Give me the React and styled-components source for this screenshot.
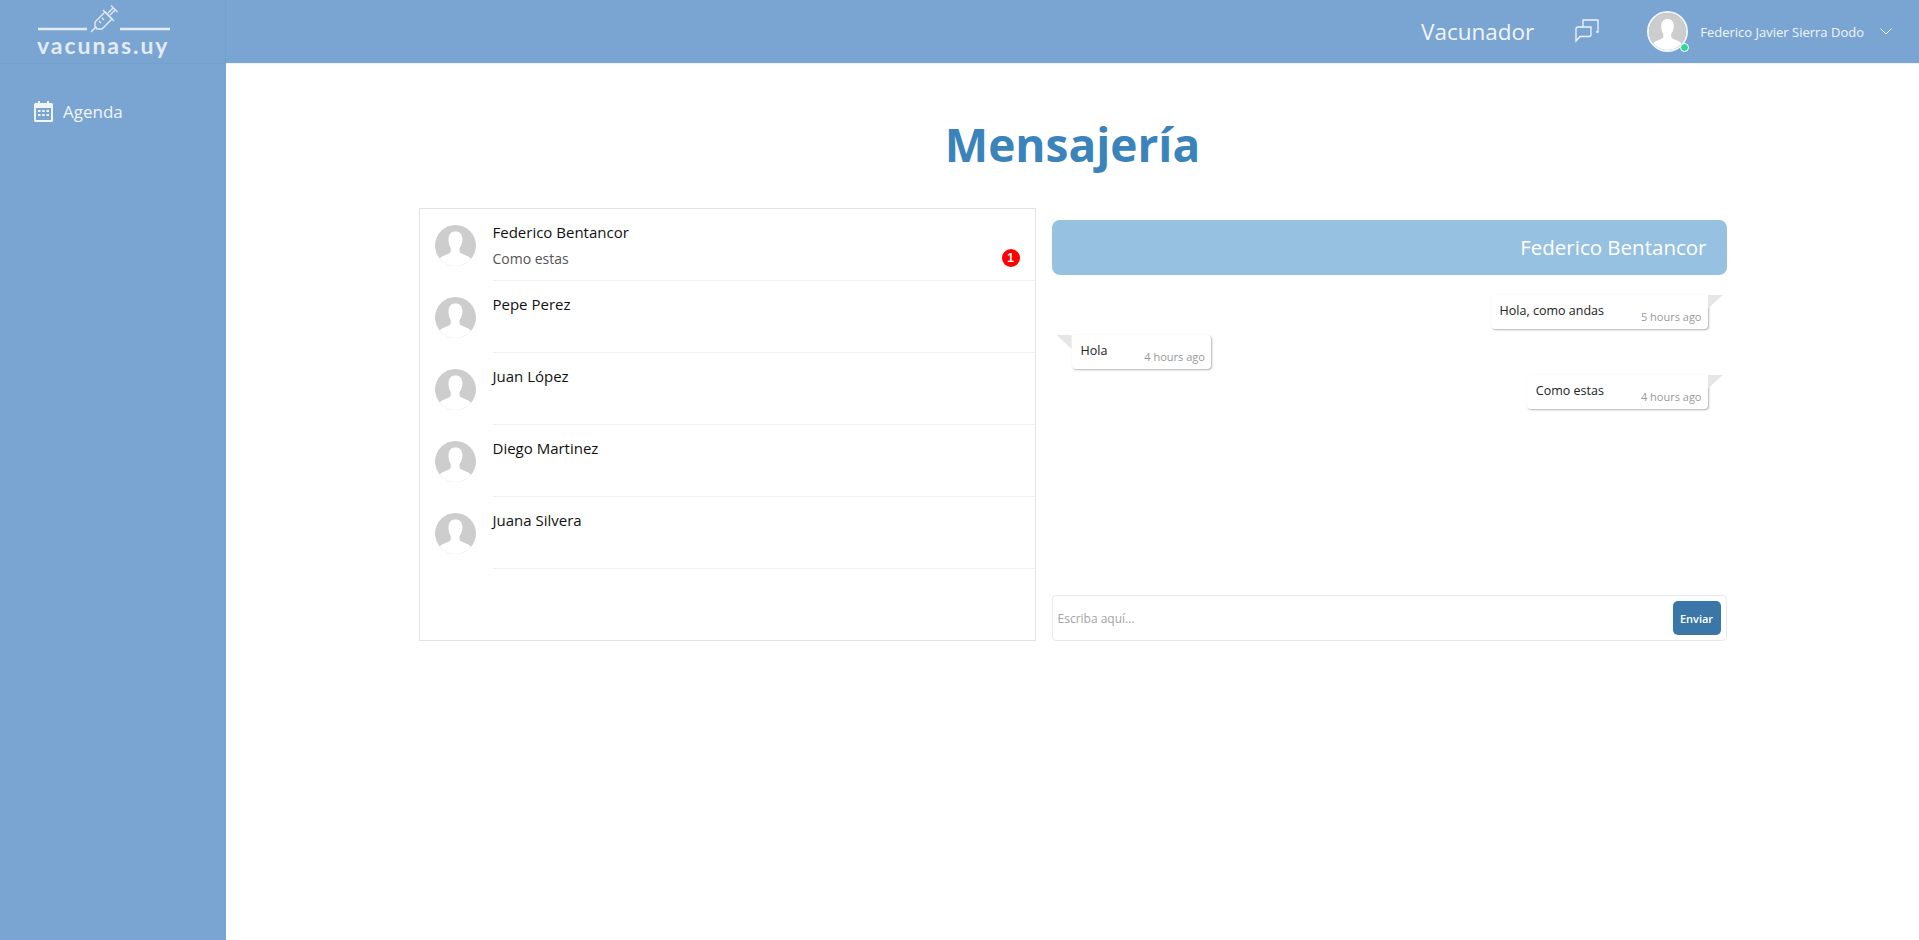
import React from 'react'
import styled, { createGlobalStyle } from 'styled-components'

const GlobalStyle = createGlobalStyle`
  html, body {
    margin: 0;
    padding: 0;
    height: 100%;
    background: #fff;
    font-family: "Open Sans", "Noto Sans", sans-serif;
  }
  * { box-sizing: border-box; }
`

const contacts = [
  { name: 'Federico Bentancor', last: 'Como estas', unread: 1 },
  { name: 'Pepe Perez' },
  { name: 'Juan López' },
  { name: 'Diego Martinez' },
  { name: 'Juana Silvera' },
]

const messages = [
  { text: 'Hola, como andas', time: '5 hours ago', mine: true },
  { text: 'Hola', time: '4 hours ago', mine: false },
  { text: 'Como estas', time: '4 hours ago', mine: true },
]

const Avatar = ({ className }) => (
  <svg className={className} viewBox="0 0 40 40">
    <defs>
      <clipPath id="av"><circle cx="20" cy="20" r="20" /></clipPath>
    </defs>
    <g clipPath="url(#av)">
      <rect width="40" height="40" fill="#cdcdcd" />
      <path d="M13.2 14c0-5 2.8-7.6 6.8-7.6s6.8 2.6 6.8 7.6c0 3.4-1.2 6.6-2.8 8.4v3.2c0 1.2 1 1.9 2.4 2.5l5.6 2.4c2 .9 3 2.2 3.4 4.5V41H4v-6c.4-2.300 1.400-3.600 3.400-4.500l5.600-2.400c1.400-.6 2.400-1.300 2.400-2.500v-3.200c-1.600-1.800-2.200-5-2.200-8.400z" fill="#fff" />
    </g>
  </svg>
)

const Page = styled.div`
  display: flex;
  min-height: 940px;
`

const Sidebar = styled.aside`
  width: 226px;
  flex-shrink: 0;
  background: #7aa5d2;
`

const LogoBox = styled.div`
  height: 64px;
  padding: 4px 0 0 37px;
  border-right: 1px solid #74a0cd;
  border-bottom: 1px solid #74a0cd;
`

const LogoArt = styled.svg`
  display: block;
  width: 134px;
  height: 31px;
`

const LogoText = styled.div`
  margin-top: -1px;
  font-family: "Lato", sans-serif;
  font-size: 23px;
  line-height: 23px;
  font-weight: 700;
  letter-spacing: 1.95px;
  color: #e3ebf4;
`

const Nav = styled.nav`
  padding: 32px 0 0 34px;
`

const NavItem = styled.a`
  display: flex;
  align-items: center;
  gap: 10px;
  height: 30px;
  color: #f0f5fa;
  font-size: 17px;
`

const Main = styled.div`
  flex: 1;
  min-width: 0;
`

const Topbar = styled.header`
  height: 64px;
  background: #7aa5d2;
  border-bottom: 1px solid #f2f2f2;
  display: flex;
  align-items: center;
  justify-content: flex-end;
  padding-right: 27px;
  color: #f1f5f9;
`

const Role = styled.span`
  font-size: 22.500px;
  margin-right: 41px;
`

const ChatIcon = styled.svg`
  width: 25px;
  height: 25px;
  margin-right: 47px;
`

const UserAvatar = styled.div`
  position: relative;
  width: 41px;
  height: 41px;
  margin-right: 12px;
  border: 2px solid #f1f5f9;
  border-radius: 50%;

  svg { display: block; width: 100%; height: 100%; }
`

const Online = styled.span`
  position: absolute;
  right: -3px;
  bottom: -2px;
  width: 9px;
  height: 9px;
  border-radius: 50%;
  background: #33d49b;
  border: 1px solid #fff;
`

const UserName = styled.span`
  font-size: 13px;
  margin-right: 16px;
`

const Content = styled.main`
  width: 1308px;
  margin: 0 auto;
`

const Title = styled.h1`
  margin: 0;
  padding-top: 46px;
  height: 144px;
  text-align: center;
  color: #3a84bb;
  font-size: 46px;
  line-height: 68px;
  font-weight: 700;
`

const Panels = styled.div`
  display: grid;
  grid-template-columns: 617px 675px;
  column-gap: 16px;
  height: 433px;
`

const ContactList = styled.section`
  border: 1px solid #e3e3e3;
`

const ContactRow = styled.div`
  display: flex;
  height: 72px;
  padding-left: 15px;
`

const ContactAvatar = styled(Avatar)`
  width: 41px;
  height: 41px;
  margin: 16px 17px 0 0;
  flex-shrink: 0;
`

const ContactBody = styled.div`
  position: relative;
  flex: 1;
  padding-top: 13px;
  border-bottom: 1px solid #efefef;
`

const ContactName = styled.div`
  font-size: 15px;
  line-height: 20px;
  color: #111;
`

const ContactLast = styled.div`
  margin-top: 7px;
  font-size: 14px;
  line-height: 20px;
  color: #555;
`

const Badge = styled.span`
  position: absolute;
  right: 15px;
  bottom: 13px;
  width: 18px;
  height: 18px;
  border-radius: 50%;
  background: #f00;
  color: #fff;
  font-family: "Liberation Sans", sans-serif;
  font-size: 12px;
  font-weight: 700;
  line-height: 18px;
  text-align: center;
`

const Chat = styled.section`
  display: flex;
  flex-direction: column;
  padding-top: 12px;
`

const ChatHeader = styled.div`
  height: 55px;
  flex-shrink: 0;
  border-radius: 8px;
  background: #97c1e0;
  color: #fff;
  font-size: 20.500px;
  line-height: 55px;
  text-align: right;
  padding-right: 20px;
`

const MessageList = styled.div`
  flex: 1;
  display: flex;
  flex-direction: column;
  gap: 6px;
  padding: 20px 19px 0 20px;
`

const Bubble = styled.div`
  position: relative;
  align-self: ${p => (p.$mine ? 'flex-end' : 'flex-start')};
  display: flex;
  height: 34px;
  padding: 0 6px 0 ${p => (p.$mine ? '9px' : '9px')};
  background: #fff;
  border-radius: ${p => (p.$mine ? '4px 0 4px 4px' : '0 4px 4px 4px')};
  box-shadow: 1px 1px 2px rgba(0, 0, 0, 0.3);

  &::before {
    content: '';
    position: absolute;
    top: 0;
    ${p => (p.$mine ? 'right: -15px' : 'left: -15px')};
    width: 15px;
    height: 14px;
    background: #e6e6e6;
    clip-path: ${p => (p.$mine
      ? 'polygon(0 0, 100% 0, 0 100%)'
      : 'polygon(0 0, 100% 0, 100% 100%)')};
  }
`

const BubbleText = styled.span`
  font-size: 12.500px;
  line-height: 32px;
  color: #222;
`

const BubbleTime = styled.span`
  margin-left: ${p => (p.$mine ? '37px' : '37px')};
  font-size: 11px;
  line-height: 44px;
  color: #999;
`

const Composer = styled.form`
  height: 46px;
  display: flex;
  align-items: center;
  justify-content: space-between;
  padding: 0 5px;
  border: 1px solid #e8e8ee;
  border-radius: 4px;
`

const ComposerInput = styled.input`
  flex: 1;
  border: 0;
  outline: 0;
  padding: 0;
  font-family: inherit;
  font-size: 12px;

  &::placeholder { color: #a5a5a5; opacity: 1; }
`

const SendButton = styled.button`
  width: 48px;
  height: 34px;
  border: 0;
  border-radius: 5px;
  padding: 0;
  background: #3a77a8;
  color: #fff;
  font-family: inherit;
  font-size: 11px;
  font-weight: 600;
`

export default function App() {
  return (
    <>
      <GlobalStyle />
      <Page>
        <Sidebar>
          <LogoBox>
            <LogoArt viewBox="0 0 134 31" fill="none" stroke="#e3ebf4">
              <path d="M1 25h49M83 25h50" strokeWidth="2.400" />
              <g strokeWidth="1.400">
                <path d="M54 28l5.500-5.500" />
                <path d="M58 18l10-10 7 7-10 10h-5l-2-2z" />
                <path d="M66 6l11 11M71 9l5-5M73 11l5-5M74 1.500l6.500 6.500" />
                <path d="M62 17l2 2M65 14l2 2" />
              </g>
            </LogoArt>
            <LogoText>vacunas.uy</LogoText>
          </LogoBox>
          <Nav>
            <NavItem>
              <svg width="19" height="21" viewBox="0 0 19 21" fill="#f0f5fa">
                <path fillRule="evenodd" d="M4 0h2v2h7V0h2v2h2.500A1.500 1.500 0 0 1 19 3.500v16a1.500 1.500 0 0 1-1.500 1.500h-16A1.500 1.500 0 0 1 0 19.500v-16A1.500 1.500 0 0 1 1.500 2H4zM2 7v12h15V7z" />
                <path d="M4 9h2.500v2H4zM8.200 9h2.500v2H8.200zM12.500 9H15v2h-2.500zM4 13h2.500v2H4zM8.200 13h2.500v2H8.200zM12.500 13H15v2h-2.500z" />
              </svg>
              Agenda
            </NavItem>
          </Nav>
        </Sidebar>
        <Main>
          <Topbar>
            <Role>Vacunador</Role>
            <ChatIcon viewBox="0 0 25 25" fill="none" stroke="#f1f5f9" strokeWidth="1.300">
              <path d="M8 9V1h15v12h-2" />
              <path d="M8 5.500" />
              <path d="M16 8v7.500a2 2 0 0 1-2 2H5L1 22V10a2 2 0 0 1 2-2z" fill="#7aa5d2" />
            </ChatIcon>
            <UserAvatar>
              <Avatar />
              <Online />
            </UserAvatar>
            <UserName>Federico Javier Sierra Dodo</UserName>
            <svg width="12" height="7" viewBox="0 0 12 7" fill="none" stroke="#f1f5f9" strokeWidth="1">
              <path d="M.5.500L6 6l5.500-5.500" />
            </svg>
          </Topbar>
          <Content>
            <Title>Mensajería</Title>
            <Panels>
              <ContactList>
                {contacts.map(c => (
                  <ContactRow key={c.name}>
                    <ContactAvatar />
                    <ContactBody>
                      <ContactName>{c.name}</ContactName>
                      {c.last && <ContactLast>{c.last}</ContactLast>}
                      {c.unread && <Badge>{c.unread}</Badge>}
                    </ContactBody>
                  </ContactRow>
                ))}
              </ContactList>
              <Chat>
                <ChatHeader>Federico Bentancor</ChatHeader>
                <MessageList>
                  {messages.map((m, i) => (
                    <Bubble key={i} $mine={m.mine}>
                      <BubbleText>{m.text}</BubbleText>
                      <BubbleTime $mine={m.mine}>{m.time}</BubbleTime>
                    </Bubble>
                  ))}
                </MessageList>
                <Composer onSubmit={e => e.preventDefault()}>
                  <ComposerInput placeholder="Escriba aquí..." />
                  <SendButton>Enviar</SendButton>
                </Composer>
              </Chat>
            </Panels>
          </Content>
        </Main>
      </Page>
    </>
  )
}
